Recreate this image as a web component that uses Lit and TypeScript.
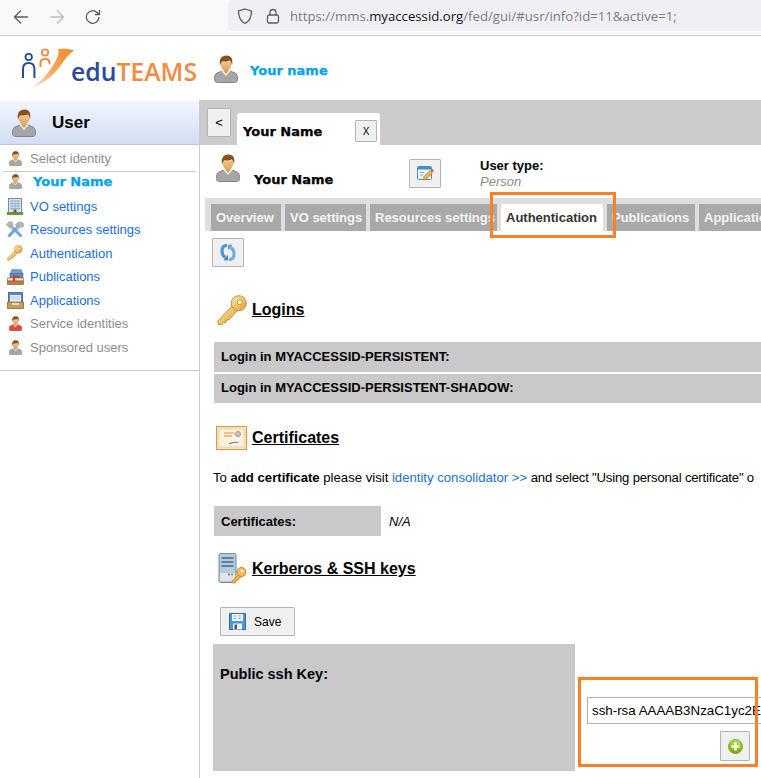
import { LitElement, html, css } from "lit";
import { customElement } from "lit/decorators.js";

const person = (w: number, shirt = "#a6a6a6", dark = "#7d7d7d") => html`<svg width=${w} height=${Math.round((w * 28) / 24)} viewBox="0 0 24 28" style="display:block">
  <defs>
    <linearGradient id="sk" x1="0" y1="0" x2="0" y2="1"><stop offset="0" stop-color="#f7d9a4"/><stop offset="1" stop-color="#dba763"/></linearGradient>
  </defs>
  <path d="M3.500 27.500c-1.800 0-3-1-3-3 0-3.500.5-6 3.500-7l4.500-1.500h7l4.500 1.500c3 1 3.500 3.500 3.500 7 0 2-1.200 3-3 3z" fill=${shirt} stroke=${dark} stroke-width=".9"/>
  <path d="M7.500 16l4.500 5 4.500-5-1.500-.8h-6z" fill="#eeeeee"/>
  <path d="M9.500 13h5v3l-2.500 3-2.500-3z" fill="#d59f60"/>
  <ellipse cx="12" cy="8.500" rx="5.600" ry="7" fill="url(#sk)"/>
  <path d="M6 10.500C4.800 4 7.500 .5 12.500 .5c5 0 6.800 4 5.500 10-.3-2.500-1-4.200-2.200-5.200-2 1.200-5.300 1.400-7 .6C7.300 6.900 6.400 8.500 6 10.500z" fill="#8a4f1e"/>
</svg>`;

const key = (size: number) => html`<svg width=${size} height=${size} viewBox="0 0 32 32" style="display:block">
  <defs><linearGradient id="kg" x1="0" y1="0" x2="1" y2="1"><stop offset="0" stop-color="#fde9ab"/><stop offset="1" stop-color="#e59c2f"/></linearGradient></defs>
  <path d="M16 11L.8 27l.6 3.500 3.500.3 2-2.500 2.200.3.600-2.600 2.700-.4L21 16z" fill="url(#kg)" stroke="#bd8127" stroke-width=".9"/>
  <circle cx="22.500" cy="8.500" r="7.800" fill="url(#kg)" stroke="#bd8127" stroke-width=".9"/>
  <circle cx="23.500" cy="7.500" r="2.500" fill="#fff6dc" stroke="#bd8127" stroke-width=".8"/>
</svg>`;

const building = html`<svg width="16" height="17" viewBox="0 0 16 17" style="display:block">
  <rect x="1.500" y="0.500" width="13" height="14" fill="#d5e3ee" stroke="#6f8fab"/>
  <path d="M3 3h10M3 5.500h10M3 8h10M3 10.500h10M5 2v10M8 2v10M11 2v10" stroke="#98b2c8" stroke-width="1"/>
  <rect x="0" y="14" width="16" height="3" fill="#5d9a3a"/>
  <rect x="6.500" y="11.500" width="3" height="3.500" fill="#8a5a2b"/>
</svg>`;

const tools = html`<svg width="18" height="18" viewBox="0 0 18 18" style="display:block">
  <path d="M2.500 15.500L12.500 5" stroke="#6ea6dc" stroke-width="3"/>
  <path d="M15.500 15.500L5 5" stroke="#6ea6dc" stroke-width="3"/>
  <path d="M7 8L3 4" stroke="#b3b9bf" stroke-width="3"/>
  <path d="M11 8l3-3" stroke="#b3b9bf" stroke-width="3"/>
  <path d="M9.500 3.500L13 .8l4 1.200.5 3.500-2 .8-1.500-2-2 1.700z" fill="#b3b9bf" stroke="#7d8389" stroke-width=".5"/>
  <path d="M.5 3.500L3 .8l3 .4 1 2.500-2 1L2.500 6z" fill="#b3b9bf" stroke="#7d8389" stroke-width=".5"/>
</svg>`;

const books = html`<svg width="17" height="16" viewBox="0 0 17 16" style="display:block">
  <path d="M5 .8h9l1.500 3.700H3.500z" fill="#6ea4d6" stroke="#3f6f9f" stroke-width=".7"/>
  <rect x="3" y="4.500" width="13" height="4.500" fill="#5b8fc4" stroke="#3f6f9f" stroke-width=".6"/>
  <rect x="0.500" y="9" width="16" height="3" fill="#f5e8cf" stroke="#8a6a3a" stroke-width=".6"/>
  <rect x="0.500" y="12" width="16" height="3.500" fill="#b9803f" stroke="#7f5524" stroke-width=".6"/>
  <rect x="6" y="6" width="2" height="6" fill="#d8342c"/>
  <rect x="8" y="7" width="5" height="1.500" fill="#d8342c"/>
</svg>`;

const tray = html`<svg width="17" height="17" viewBox="0 0 17 17" style="display:block">
  <rect x="1.500" y="0.500" width="14" height="10" fill="#4f8ccb" stroke="#2f5f94" stroke-width=".8"/>
  <rect x="3" y="3" width="11" height="7" fill="#e9eef2"/>
  <path d="M4 5h9M4 7h9" stroke="#c3ccd3"/>
  <path d="M0.500 10h16v6.500H.5z" fill="#c99a63" stroke="#8c6534" stroke-width=".8"/>
  <rect x="5" y="11" width="7" height="2" fill="#f0dcc0"/>
</svg>`;

const cert = html`<svg width="32" height="25" viewBox="0 0 32 25" style="display:block">
  <rect x="0.500" y="0.500" width="30" height="23" fill="#fbe6bd" stroke="#d99a4e" stroke-width="1.200"/>
  <rect x="3" y="3" width="25" height="18" fill="#fdf3dc" stroke="#e0b67c" stroke-width=".7" stroke-dasharray="1.500 1"/>
  <path d="M8 7h10M8 10h8" stroke="#e08a3c" stroke-width="1"/>
  <circle cx="22" cy="8" r="2.500" fill="#c8c8c0" stroke="#999"/>
  <path d="M13 18c3-2 6-2 9-1.500" stroke="#5a78b0" stroke-width="1.200" fill="none"/>
</svg>`;

const server = html`<svg width="29" height="32" viewBox="0 0 29 32" style="display:block">
  <rect x="1" y="0.500" width="17" height="29" rx="1.500" fill="#b7c9dc" stroke="#7189a3"/>
  <path d="M3.500 5h12M3.500 9h12M3.500 13h12" stroke="#5f7f9f" stroke-width="2"/>
  <rect x="2" y="20" width="15" height="8" fill="#dfe5ea"/>
  <circle cx="11" cy="21.500" r="1" fill="#d33"/><circle cx="14" cy="21.500" r="1" fill="#4a4"/>
  <path d="M20 22l-6 6v2h3l1-2 1.500-.2 4-4" fill="#eeae4a" stroke="#c4882a" stroke-width=".7"/>
  <circle cx="23.500" cy="19" r="4.500" fill="#f2bb58" stroke="#c4882a"/>
  <circle cx="24" cy="18" r="1.200" fill="#fff"/>
</svg>`;

const floppy = html`<svg width="17" height="17" viewBox="0 0 17 17" style="display:block">
  <path d="M0.500 0.500h16v16H.5z" fill="#4d97d6" stroke="#2c6aa3"/>
  <rect x="3" y="1" width="11" height="7" fill="#f3f6f8"/>
  <path d="M4.500 3h3M9 3h3M4.500 5.500h3M9 5.500h3" stroke="#9aa7b2"/>
  <rect x="4" y="10.500" width="9" height="6" fill="#eef1f3"/>
  <rect x="5.500" y="11.500" width="2.500" height="4.500" fill="#555"/>
</svg>`;

const refresh = html`<svg width="16" height="17" viewBox="0 0 16 17" style="display:block">
  <path d="M7 1.500C3.500 1.500 2 3.500 2 7c0 2.500.5 5 3.500 6.500" fill="none" stroke="#4f96d8" stroke-width="3.200"/>
  <path d="M3.500 16.500l4.500-.3V10.500z" fill="#3f86c8"/>
  <path d="M9 15.500c3.500 0 5-2 5-5.500 0-2.500-.5-5-3.500-6.500" fill="none" stroke="#6fb1e6" stroke-width="3.200"/>
  <path d="M12.500.5L8 .8v5.700z" fill="#5aa1dc"/>
</svg>`;

const editCard = html`<svg width="17" height="16" viewBox="0 0 17 16" style="display:block">
  <rect x="0.500" y="0.500" width="14" height="13" rx="1" fill="#eaf4fb" stroke="#3f8fce"/>
  <rect x="1" y="1" width="13" height="2.500" fill="#3f8fce"/>
  <path d="M3 6.500h4M3 9h3" stroke="#9aa7b2"/>
  <path d="M6 14l1-3.500 6-6 2.500 2.500-6 6z" fill="#f2b33d" stroke="#a8741c" stroke-width=".6"/>
  <path d="M13.500 4l1.500-1.500 2 2L15.500 6.500z" fill="#d86a6a"/>
</svg>`;

const plus = html`<svg width="15" height="15" viewBox="0 0 15 15" style="display:block">
  <defs><linearGradient id="pg" x1="0" y1="0" x2="0" y2="1"><stop offset="0" stop-color="#bfe04a"/><stop offset="1" stop-color="#6fa80f"/></linearGradient></defs>
  <circle cx="7.500" cy="7.500" r="7" fill="url(#pg)" stroke="#5f8f12" stroke-width=".7"/>
  <path d="M7.500 3.500v8M3.500 7.500h8" stroke="#fff" stroke-width="2.400"/>
</svg>`;

const logo = html`<svg width="178" height="42" viewBox="0 0 178 42" style="display:block">
  <defs><linearGradient id="sw" x1="1" y1="0" x2="0" y2="1"><stop offset="0" stop-color="#f08a24"/><stop offset=".55" stop-color="#f5a860"/><stop offset="1" stop-color="#fde6d2"/></linearGradient></defs>
  <path d="M12 39.500C24 36 34 27 41 17c4-6 8-11.500 13-14.500C49 .5 43 .5 38 1c1.500 3 0 8-3.500 14C30 23 22 33 12 39.500z" fill="url(#sw)"/>
  <circle cx="8.700" cy="9" r="3.200" fill="none" stroke="#2a4a9a" stroke-width="1.800"/>
  <path d="M3 30V21c0-4 2-6 5.700-6s5.700 2 5.700 6v9" fill="none" stroke="#2a4a9a" stroke-width="2"/>
  <circle cx="25" cy="4.500" r="3.200" fill="none" stroke="#f58a3c" stroke-width="1.800"/>
  <path d="M20.500 19v-4c0-2.800 1.600-4 4.500-4s4.500 1.200 4.500 4v1.500" fill="none" stroke="#f58a3c" stroke-width="2"/>
  <text x="51" y="33" font-family="Open Sans, sans-serif" font-size="25" font-weight="600" textLength="126" lengthAdjust="spacingAndGlyphs"><tspan fill="#2a4a9a">edu</tspan><tspan fill="#f58a3c">TEAMS</tspan></text>
</svg>`;

@customElement("app-root")
export class AppRoot extends LitElement {
  static styles = css`
    :host { display: block; width: 761px; height: 778px; overflow: hidden; position: relative; background: #fff; font-family: "Liberation Sans", Arial, sans-serif; font-size: 13px; color: #000; }
    .chrome { height: 35px; background: #f9f9fb; border-bottom: 1px solid #ccc; display: flex; align-items: center; padding-left: 13px; }
    .nav { display: flex; gap: 20px; width: 215px; align-items: center; margin-top: -1px; flex: none; }
    .url { flex: 1; height: 31px; margin-top: -4px; background: #f0f0f4; border-radius: 4px 0 0 4px; display: flex; align-items: center; padding-left: 9px; gap: 12px; font: 13.2px "Open Sans", "Liberation Sans", sans-serif; color: #7b7b85; white-space: nowrap; }
    .url b { font-weight: 400; color: #15141a; }
    .url .lk { margin: 0 -2px 0 1px; }
    .head { height: 64px; display: flex; align-items: flex-start; }
    .logo { margin: 12px 0 0 20px; width: 194px; flex: none; }
    .h-user { margin: 19px 0 0 0; }
    .h-name { font: bold 13px "DejaVu Sans", sans-serif; -webkit-text-stroke: .25px #00a3e8; color: #00a3e8; margin: 27px 0 0 12px; }
    .body { display: flex; height: 678px; }
    .side { width: 199px; border-right: 1px solid #ccc; flex: none; }
    .side-head { height: 43px; margin-top: 1px; display: flex; align-items: center; padding-left: 12px; gap: 16px; background: linear-gradient(#f2f5fc, #d2ddf4); border-bottom: 1px solid #c4c4c4; font: bold 17px "Liberation Sans", sans-serif; }
    .side-list { height: 225px; border-bottom: 1px solid #ccc; }
    .ic { width: 18px; margin-right: 6px; display: flex; justify-content: center; flex: none; }
    .sel { height: 27px; margin: 0 3px; padding-left: 3px; border-bottom: 1px solid #ccc; display: flex; align-items: center; color: #8d8d8d; box-sizing: border-box; }
    .cur { height: 18px; margin-bottom: 4.500px; padding-left: 6px; display: flex; align-items: center; color: #00a3e8; font: bold 13px "DejaVu Sans", sans-serif; -webkit-text-stroke: .25px #00a3e8; }
    .cur .ic { margin-right: 9px; }
    .item { height: 23.500px; display: flex; align-items: center; padding-left: 6px; color: #1a6fd8; }
    .item.dis { color: #8d8d8d; }
    .main { flex: 1; min-width: 0; overflow: hidden; }
    .tabband { height: 45px; background: #cbcbcb; display: flex; align-items: flex-end; padding-left: 7px; }
    .btn { display: flex; align-items: center; justify-content: center; background: #f0f0f0; border: 1px solid #b4b4b4; border-radius: 1px; box-sizing: border-box; flex: none; }
    .back { width: 24px; height: 29px; margin-bottom: 8px; font-size: 13px; }
    .doc-tab { width: 143px; height: 32px; margin-left: 6px; background: #fff; border-radius: 3px 3px 0 0; display: flex; justify-content: space-between; padding: 7px 3px 0 6px; box-sizing: border-box; font: bold 13px "DejaVu Sans", sans-serif; -webkit-text-stroke: .25px #000; }
    .doc-tab span { line-height: 20px; margin-top: 2px; }
    .close { width: 22px; height: 22px; font: 10px "Liberation Sans", sans-serif; -webkit-text-stroke: 0; }
    .userrow { height: 53px; display: flex; align-items: flex-start; padding-left: 16px; }
    .userrow .pic { margin-top: 9px; }
    .userrow .nm { font: bold 13px "DejaVu Sans", sans-serif; -webkit-text-stroke: .25px #000; margin: 27px 0 0 14px; width: 155px; }
    .edit { width: 32px; height: 29px; margin-top: 14px; }
    .utype { margin: 13px 0 0 39px; line-height: 16px; }
    .utype b { display: block; }
    .utype i { color: #8a8a8a; display: block; }
    .tabs { height: 33px; margin-left: 5px; background: #dedede; display: flex; align-items: flex-end; padding-left: 6px; gap: 4px; white-space: nowrap; }
    .tab { height: 27px; background: #a9a9a9; color: #f4f4f4; font-weight: bold; display: flex; align-items: center; padding-left: 5px; flex: none; box-sizing: border-box; overflow: hidden; }
    .tab.on { background: #fff; color: #333; }
    .content { padding: 7px 0 0 12px; }
    .refresh { width: 32px; height: 29px; }
    .sec { display: flex; align-items: center; font: bold 16px "Liberation Sans", sans-serif; text-decoration: underline; }
    .sec .ico { flex: none; }
    .logins { margin: 28px 0 0 5px; height: 30px; }
    .logins .ico { width: 35px; }
    .row { height: 30px; margin-left: 2px; background: #c9c9c9; font-weight: bold; display: flex; align-items: center; padding: 0 0 2px 7px; box-sizing: border-box; white-space: nowrap; }
    .r1 { margin-top: 17px; }
    .r2 { margin-top: 2px; height: 29px; }
    .certs { margin: 22px 0 0 4px; height: 26px; }
    .certs .ico { width: 36px; }
    .para { margin: 17px 0 0 1px; white-space: nowrap; line-height: 20px; font-size: 13.150px; }
    .para a { color: #1a6fd8; text-decoration: none; }
    .para .tail { letter-spacing: -.2px; }
    .kv { margin: 18px 0 0 2px; display: flex; height: 30px; }
    .kv .k { width: 160px; padding-left: 7px; background: #c9c9c9; font-weight: bold; display: flex; align-items: center; }
    .kv .v { margin-left: 8px; font-style: italic; display: flex; align-items: center; }
    .kerb { margin: 17px 0 0 6px; height: 32px; }
    .kerb .ico { width: 34px; }
    .save { width: 75px; height: 29px; margin: 22px 0 0 8px; gap: 8px; font-size: 12px; justify-content: flex-start; padding-left: 8px; }
    .ssh { display: flex; margin: 8px 0 0 1px; height: 127px; }
    .ssh .k { width: 362px; background: #c9c9c9; font-weight: bold; padding: 22px 0 0 7px; box-sizing: border-box; line-height: 16px; font-size: 14.500px; }
    .ssh .v { flex: 1; min-width: 0; display: flex; flex-direction: column; padding: 53px 0 0 12px; overflow: hidden; }
    .input { height: 27px; width: 200px; box-sizing: border-box; border: 1px solid #b4b4b4; padding-left: 4px; display: flex; align-items: center; overflow: hidden; white-space: nowrap; font-size: 13.330px; }
    .add { width: 30px; height: 30px; margin: 7px 0 0 133px; }
    .mark { position: absolute; border: 3px solid #ff7f27; box-sizing: border-box; pointer-events: none; }
    .m1 { left: 490px; top: 192px; width: 126px; height: 46px; }
    .m2 { left: 578px; top: 677px; width: 180px; height: 90px; }
  `;

  render() {
    return html`
      <div class="chrome">
        <div class="nav">
          <svg width="16" height="16" viewBox="0 0 16 16" fill="none" stroke="#5b5b66" stroke-width="1.300"><path d="M15 8H1.500M8 1.500L1.500 8 8 14.500"/></svg>
          <svg width="16" height="16" viewBox="0 0 16 16" fill="none" stroke="#bdbdc2" stroke-width="1.300"><path d="M1 8h13.500M8 1.500L14.500 8 8 14.500"/></svg>
          <svg width="16" height="16" viewBox="0 0 16 16" fill="none" stroke="#5b5b66" stroke-width="1.300"><path d="M14 8a6.300 6.300 0 1 1-2-4.600L14 5.300M14.500 1v4.500H10"/></svg>
        </div>
        <div class="url">
          <svg width="16" height="16" viewBox="0 0 16 16" fill="none" stroke="#5b5b66" stroke-width="1.300"><path d="M8 1l6.500 2c0 6-1.500 10-6.500 12.500C3 13 1.500 9 1.500 3z"/></svg>
          <svg class="lk" width="14" height="16" viewBox="0 0 14 16" fill="none" stroke="#5b5b66" stroke-width="1.300"><rect x="1.500" y="7" width="11" height="8" rx="1.500"/><path d="M4 7V4.500a3 3 0 0 1 6 0V7"/></svg>
          <span>https://mms.<b>myaccessid.org</b>/fed/gui/#usr/info?id=11&active=1;</span>
        </div>
      </div>
      <div class="head">
        <div class="logo">${logo}</div>
        <div class="h-user">${person(24)}</div>
        <div class="h-name">Your name</div>
      </div>
      <div class="body">
        <aside class="side">
          <div class="side-head">${person(24)}<span>User</span></div>
          <div class="side-list">
            <div class="sel"><span class="ic">${person(13)}</span>Select identity</div>
            <div class="cur"><span class="ic">${person(13)}</span>Your Name</div>
            <div class="item"><span class="ic">${building}</span>VO settings</div>
            <div class="item"><span class="ic">${tools}</span>Resources settings</div>
            <div class="item"><span class="ic">${key(16)}</span>Authentication</div>
            <div class="item"><span class="ic">${books}</span>Publications</div>
            <div class="item"><span class="ic">${tray}</span>Applications</div>
            <div class="item dis"><span class="ic">${person(13, "#dd4a3e", "#a8352c")}</span>Service identities</div>
            <div class="item dis"><span class="ic">${person(13)}</span>Sponsored users</div>
          </div>
        </aside>
        <main class="main">
          <div class="tabband">
            <div class="btn back">&lt;</div>
            <div class="doc-tab"><span>Your Name</span><div class="btn close">X</div></div>
          </div>
          <div class="userrow">
            <div class="pic">${person(24)}</div>
            <div class="nm">Your Name</div>
            <div class="btn edit">${editCard}</div>
            <div class="utype"><b>User type:</b><i>Person</i></div>
          </div>
          <div class="tabs">
            <div class="tab" style="width:70px">Overview</div>
            <div class="tab" style="width:81px">VO settings</div>
            <div class="tab" style="width:127px">Resources settings</div>
            <div class="tab on" style="width:102px">Authentication</div>
            <div class="tab" style="width:88px">Publications</div>
            <div class="tab" style="width:88px">Applications</div>
          </div>
          <div class="content">
            <div class="btn refresh">${refresh}</div>
            <div class="sec logins"><span class="ico">${key(31)}</span>Logins</div>
            <div class="row r1">Login in MYACCESSID-PERSISTENT:</div>
            <div class="row r2">Login in MYACCESSID-PERSISTENT-SHADOW:</div>
            <div class="sec certs"><span class="ico">${cert}</span>Certificates</div>
            <div class="para">To <b>add certificate</b> please visit <a>identity consolidator &gt;&gt;</a> <span class="tail">and select "Using personal certificate" o</span></div>
            <div class="kv"><div class="k">Certificates:</div><div class="v">N/A</div></div>
            <div class="sec kerb"><span class="ico">${server}</span>Kerberos &amp; SSH keys</div>
            <div class="btn save">${floppy}<span>Save</span></div>
            <div class="ssh">
              <div class="k">Public ssh Key:</div>
              <div class="v">
                <div class="input">ssh-rsa AAAAB3NzaC1yc2EAAAADAQABAAABAQ</div>
                <div class="btn add">${plus}</div>
              </div>
            </div>
          </div>
        </main>
      </div>
      <div class="mark m1"></div>
      <div class="mark m2"></div>
    `;
  }
}
